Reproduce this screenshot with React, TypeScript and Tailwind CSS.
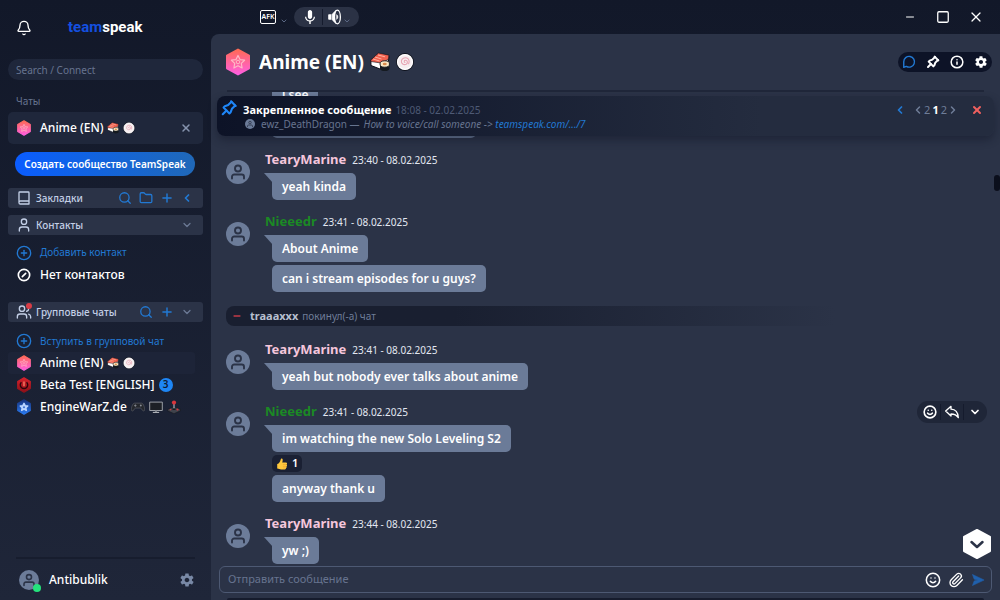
import type { ReactNode } from "react";
import {
  Bell,
  ChevronDown,
  ChevronLeft,
  ChevronRight,
  CirclePlus,
  Folder,
  Info,
  Minus,
  Paperclip,
  Plus,
  Search,
  Smile,
  Square,
  User,
  Users,
  X,
} from "lucide-react";
import { IoMdMic, IoMdSettings } from "react-icons/io";
import { TbPin } from "react-icons/tb";
import clsx from "clsx";

/* ---------- drawings ---------- */

type HexProps = { from: string; to: string; className?: string; children?: ReactNode };

function Hex({ from, to, className, children }: HexProps) {
  const id = `hex-${from.slice(1)}`;
  return (
    <svg viewBox="0 0 26 28" className={className} aria-hidden="true">
      <defs>
        <linearGradient id={id} x1="0" y1="0" x2="0" y2="1">
          <stop offset="0" stopColor={from} />
          <stop offset="1" stopColor={to} />
        </linearGradient>
      </defs>
      <path
        d="M13 1.5 24 7.7V20.3L13 26.5 2 20.3V7.7Z"
        fill={`url(#${id})`}
        stroke={`url(#${id})`}
        strokeWidth="2"
        strokeLinejoin="round"
      />
      {children}
    </svg>
  );
}

const star = "M13 7.5 15 11.6 19.6 12.2 16.3 15.4 17.1 20 13 17.8 8.9 20 9.7 15.4 6.4 12.2 11 11.6Z";

function AnimeHex({ className }: { className?: string }) {
  return (
    <Hex from="#ff6a55" to="#ff5fe0" className={className}>
      <path d={star} fill="none" stroke="#ffb9c6" strokeWidth="1.2" strokeLinejoin="round" />
      <circle cx="13" cy="14" r="1.8" fill="none" stroke="#ffb9c6" />
    </Hex>
  );
}

function BetaHex({ className }: { className?: string }) {
  return (
    <Hex from="#d8212c" to="#8d1018" className={className}>
      <path d="M8.500 9a6.500 6.500 0 1 0 9 0" fill="none" stroke="#2b070c" strokeWidth="2.500" />
      <path d="M13 8v8" stroke="#ff8a6b" strokeWidth="2.200" />
    </Hex>
  );
}

function EngineHex({ className }: { className?: string }) {
  return (
    <Hex from="#16337f" to="#2a7af0" className={className}>
      <path d={star} fill="#b9d4ff" stroke="#b9d4ff" strokeWidth="2.500" strokeLinejoin="round" />
      <circle cx="13" cy="14.500" r="1.800" fill="#3a6fd0" />
    </Hex>
  );
}

function Sushi({ className }: { className?: string }) {
  return (
    <svg viewBox="0 0 20 20" className={className} aria-hidden="true">
      <path d="M.8 8 8 2l11 2.500-1 8L10 17 1 13.500Z" fill="#fff" stroke="#0b0e18" strokeWidth="1" strokeLinejoin="round" />
      <path d="M.8 8 8.500 1 19 3.200 18.200 7.500 11 11 .8 9.500Z" fill="#f0614f" stroke="#0b0e18" strokeWidth=".6" />
      <path d="m5 5 6.500 2M8 3l7 1.800M3 7l6.500 2" stroke="#ffb09d" strokeWidth="1" />
      <path d="M10 12v4.200c0 3.800 9.500 3.800 9.500 0V12Z" fill="#151a20" />
      <ellipse cx="14.750" cy="12" rx="4.750" ry="3.200" fill="#fbe8c4" stroke="#151a20" strokeWidth=".9" />
      <ellipse cx="14.750" cy="12" rx="2" ry="1.200" fill="#d98a4a" />
    </svg>
  );
}

function FishCake({ className }: { className?: string }) {
  return (
    <svg viewBox="0 0 20 20" className={className} aria-hidden="true">
      <circle cx="10" cy="10" r="9.300" fill="#f6eef0" stroke="#0b0e18" strokeWidth="1.300" />
      <circle cx="10" cy="10" r="8.300" fill="none" stroke="#fff" strokeWidth="1.400" />
      <path
        d="M10 10.500c-1.500-.5-1-2.700.8-2.500 2.300.3 2.500 3.500.5 4.500-2.800 1.300-5.700-.8-5.300-3.700C6.400 6 9.500 4.600 12 5.600c2.500 1 3.300 3.900 2 6.300"
        fill="none"
        stroke="#e8a5b3"
        strokeWidth="1.200"
        strokeLinecap="round"
      />
    </svg>
  );
}

function Gamepad({ className }: { className?: string }) {
  return (
    <svg viewBox="0 0 20 20" className={className} aria-hidden="true">
      <path
        d="M5 4.500h10c2.500 0 4.500 6 4.500 9 0 3-2.800 2.500-4 0-.7-1.500-1.500-2-2.500-2H7c-1 0-1.800.5-2.500 2-1 2.500-4 3-4 0 0-3 2-9 4.500-9Z"
        fill="#24272d"
        stroke="#5b5f67"
        strokeWidth="1"
      />
      <path d="M4.500 8h3.400M6.200 6.300v3.400" stroke="#8a8e96" strokeWidth="1.200" />
      <circle cx="14" cy="8" r="1.400" fill="#8a8e96" />
    </svg>
  );
}

function Monitor({ className }: { className?: string }) {
  return (
    <svg viewBox="0 0 20 20" className={className} aria-hidden="true">
      <path d="M1 3h18v12H1Z" fill="#1d2026" stroke="#a8abb2" strokeWidth="1.300" />
      <path d="M8.500 15h3v2h-3Z" fill="#777b83" />
      <path d="M5.500 17.700h9" stroke="#c4c7cc" strokeWidth="1.400" />
    </svg>
  );
}

function Joystick({ className }: { className?: string }) {
  return (
    <svg viewBox="0 0 20 20" className={className} aria-hidden="true">
      <path d="m.8 13.500 9.200-4 9.200 4v2L10 19.500.8 15.500Z" fill="#3f434c" stroke="#14161b" strokeWidth=".8" />
      <path d="M10 5v8" stroke="#a5a9b1" strokeWidth="1.800" />
      <circle cx="10" cy="3.700" r="3" fill="#d9363c" />
      <ellipse cx="10" cy="13" rx="2.500" ry="1.200" fill="#15171b" />
      <circle cx="15" cy="13.600" r="1.500" fill="#d9363c" />
      <circle cx="5" cy="13.600" r="1.200" fill="#d9363c" />
    </svg>
  );
}

function ThumbsUp({ className }: { className?: string }) {
  return (
    <svg viewBox="0 0 20 20" className={className} aria-hidden="true">
      <path
        d="M2 10c2 0 5-3.500 6-8 .4-1.600 3-1.200 3.200 1 .1 1.500-.4 3.200-.9 4.700h6.200c2.300 0 2.500 2.600 1 3.200 1.300.7 1.200 2.600-.1 3.100.8.9.4 2.300-.8 2.600.3 1.300-.5 2.400-2 2.400H8.500C6 19 5 17.500 2 17.500Z"
        fill="#ffc83d"
      />
      <path d="M11.500 10.900h5.500M11.500 14h5.500M12 16.600h4" stroke="#e3972b" strokeWidth=".8" />
    </svg>
  );
}

function Speaker({ className }: { className?: string }) {
  return (
    <svg viewBox="0 0 20 20" className={className} fill="none" stroke="currentColor" aria-hidden="true">
      <path d="M2.500 6.500h3v7h-3a1 1 0 0 1-1-1v-5a1 1 0 0 1 1-1Z" fill="currentColor" stroke="none" />
      <path d="m6.500 6.500 4.500-4.500c-2 5-2 11 0 16l-4.500-4.500Z" fill="currentColor" strokeWidth="1" strokeLinejoin="round" />
      <ellipse cx="13" cy="10" rx="3.700" ry="8.500" strokeWidth="1.600" />
      <path d="M12 7c2.200 1 2.200 5 0 6Z" fill="currentColor" strokeWidth=".6" />
    </svg>
  );
}

function ChatIcon({ className }: { className?: string }) {
  return (
    <svg viewBox="0 0 24 24" className={className} fill="none" stroke="currentColor" strokeWidth="2.400" aria-hidden="true">
      <path d="M3 21V11.500a9.200 9.200 0 1 1 4.500 8L3 21Z" strokeLinejoin="round" />
    </svg>
  );
}

function BookmarksIcon({ className }: { className?: string }) {
  return (
    <svg viewBox="0 0 24 24" className={className} fill="none" stroke="currentColor" strokeWidth="2" strokeLinejoin="round" aria-hidden="true">
      <path d="M5.500 3h13a1 1 0 0 1 1 1v17h-13a2 2 0 0 1-2-2V4a1 1 0 0 1 1-1ZM4.500 18a2 2 0 0 1 2-1.500h13" />
    </svg>
  );
}

function ReplyIcon({ className }: { className?: string }) {
  return (
    <svg viewBox="0 0 24 24" className={className} fill="none" stroke="currentColor" strokeWidth="2" strokeLinejoin="round" aria-hidden="true">
      <path d="M2.500 10.500 10.500 3.500v4.300c7 .3 10.500 4.500 11 12.700-2.500-4-5.500-5.500-11-5.500v3Z" />
    </svg>
  );
}

function SendIcon({ className }: { className?: string }) {
  return (
    <svg viewBox="0 0 24 24" className={className} aria-hidden="true">
      <path d="M2.500 2.500 22.500 12 2.500 21.500 5.500 13.500 12 12 5.500 10.500Z" fill="currentColor" stroke="currentColor" strokeLinejoin="round" />
    </svg>
  );
}

function Avatar({ className }: { className?: string }) {
  return (
    <svg viewBox="0 0 24 24" className={className} aria-hidden="true">
      <circle cx="12" cy="12" r="12" fill="#6c7c99" />
      <circle cx="12" cy="8.500" r="3" fill="none" stroke="#2b3347" strokeWidth="1.900" />
      <path d="M6 18.500v-1.700c0-1.500 1-2.300 2.300-2.300h7.400c1.300 0 2.300.8 2.300 2.300v1.700" fill="none" stroke="#2b3347" strokeWidth="1.900" strokeLinecap="round" />
    </svg>
  );
}

/* ---------- sidebar ---------- */

function SectionHeader({ icon, title, children }: { icon: ReactNode; title: string; children: ReactNode }) {
  return (
    <div className="flex h-5 items-center rounded-[3px] bg-[#2b3347] pl-2 pr-2.5 text-[#c3cfe6]">
      {icon}
      <h2 className="ml-1 text-[10px] font-medium whitespace-nowrap">{title}</h2>
      <div className="ml-auto flex items-center gap-[7px] text-[#2279d3]">{children}</div>
    </div>
  );
}

function IconButton({ label, className, children }: { label: string; className?: string; children: ReactNode }) {
  return (
    <button type="button" aria-label={label} className={clsx("flex shrink-0 items-center justify-center", className)}>
      {children}
    </button>
  );
}

const groupChats = [
  {
    name: "Anime (EN)",
    icon: <AnimeHex className="size-4" />,
    extra: (
      <>
        <Sushi className="size-3" />
        <FishCake className="size-3" />
      </>
    ),
    active: true,
  },
  {
    name: "Beta Test [ENGLISH]",
    icon: <BetaHex className="size-4" />,
    extra: (
      <span className="flex size-3.5 items-center justify-center rounded-full bg-[#1e86f5] text-[10px] font-semibold text-[#0f1a33]">3</span>
    ),
  },
  {
    name: "EngineWarZ.de",
    icon: <EngineHex className="size-4" />,
    extra: (
      <>
        <Gamepad className="size-3.5 shrink-0" />
        <Monitor className="size-3.5 shrink-0" />
        <Joystick className="size-3.5 shrink-0" />
      </>
    ),
  },
];

function Sidebar() {
  return (
    <aside className="flex w-[211px] shrink-0 flex-col px-2">
      <div className="flex h-[59px] items-center gap-9 pl-2 pb-1">
        <IconButton label="Notifications" className="text-white">
          <Bell className="size-4" strokeWidth={2} />
        </IconButton>
        <a href="#" className="font-['Roboto',sans-serif] text-[15px] font-bold text-white">
          <span className="text-[#1450e0]">team</span>speak
        </a>
      </div>
      <input
        type="text"
        aria-label="Search / Connect"
        placeholder="Search / Connect"
        className="h-[21px] rounded-full bg-[#1f273b] px-2 text-[10px] outline-none placeholder:text-[#67748f]"
      />
      <h2 className="mt-[11px] pl-2 text-[10px] leading-5 text-[#67748f]">Чаты</h2>
      <div className="mt-px flex h-8 items-center rounded-[5px] bg-[#1f273b] px-2">
        <a href="#" className="flex flex-1 items-center gap-1 text-xs font-medium text-white">
          <AnimeHex className="mr-1 size-4" />
          Anime (EN)
          <Sushi className="size-3" />
          <FishCake className="size-3" />
        </a>
        <IconButton label="Закрыть" className="mr-[3px] text-[#8593ad]">
          <X className="size-3" strokeWidth={3} />
        </IconButton>
      </div>
      <button
        type="button"
        className="ml-[7px] mr-2 mt-2 h-6 rounded-full bg-gradient-to-r from-[#0b5cff] to-[#2068b8] text-[10px] font-semibold whitespace-nowrap text-white"
      >
        Создать сообщество TeamSpeak
      </button>

      <div className="mt-3 flex flex-col gap-[7px]">
        <SectionHeader icon={<BookmarksIcon className="size-4" />} title="Закладки">
          <IconButton label="Поиск"><Search className="size-3.5" strokeWidth={2.2} /></IconButton>
          <IconButton label="Папка"><Folder className="size-3.5" strokeWidth={2.2} /></IconButton>
          <IconButton label="Добавить"><Plus className="size-3.5" strokeWidth={2.5} /></IconButton>
          <IconButton label="Развернуть"><ChevronLeft className="size-3" strokeWidth={3.5} /></IconButton>
        </SectionHeader>
        <SectionHeader icon={<User className="size-4" strokeWidth={2} />} title="Контакты">
          <IconButton label="Свернуть" className="text-[#6c7a95]"><ChevronDown className="size-3" strokeWidth={2.5} /></IconButton>
        </SectionHeader>
      </div>
      <div className="mt-[7px] text-xs">
        <button type="button" className="flex h-[22px] items-center gap-2 pl-2 text-[10px] text-[#2279d3]">
          <CirclePlus className="size-4" />
          Добавить контакт
        </button>
        <p className="flex h-[22px] items-center gap-2 pl-2 font-medium text-white">
          <svg viewBox="0 0 24 24" className="size-4" fill="none" stroke="currentColor" strokeWidth="2.500" strokeLinecap="round" aria-hidden="true">
            <circle cx="12" cy="12" r="8.500" />
            <path d="m9.500 14.500 5-5" />
          </svg>
          Нет контактов
        </p>
      </div>

      <div className="mt-4">
        <SectionHeader
          icon={
            <span className="relative">
              <Users className="size-4" strokeWidth={2} />
              <span className="absolute -top-px right-0 size-1.5 rounded-full bg-[#d83c46]" />
            </span>
          }
          title="Групповые чаты"
        >
          <IconButton label="Поиск"><Search className="size-3.5" strokeWidth={2.2} /></IconButton>
          <IconButton label="Добавить"><Plus className="size-3.5" strokeWidth={2.5} /></IconButton>
          <IconButton label="Свернуть" className="text-[#6c7a95]"><ChevronDown className="size-3" strokeWidth={2.5} /></IconButton>
        </SectionHeader>
      </div>
      <button type="button" className="mt-2 flex h-[22px] items-center gap-2 pl-2 text-[10px] text-[#2279d3]">
        <CirclePlus className="size-4" />
        Вступить в групповой чат
      </button>
      <ul className="mr-2">
        {groupChats.map((chat) => (
          <li key={chat.name}>
            <a
              href="#"
              className={clsx(
                "flex h-[22px] items-center gap-1 rounded-[3px] pl-2 text-xs font-medium whitespace-nowrap text-white",
                chat.active && "bg-[#1d2438]"
              )}
            >
              <span className="mr-1">{chat.icon}</span>
              {chat.name}
              {chat.extra}
            </a>
          </li>
        ))}
      </ul>

      <div className="mx-2 mt-auto flex h-[43px] items-center border-t-2 border-[#171d2e] pl-[3px]">
        <span className="relative">
          <Avatar className="size-5" />
          <span className="absolute -bottom-0.5 -right-0.5 size-2 rounded-full bg-[#25e37c]" />
        </span>
        <span className="ml-2.5 text-xs font-medium text-white">Antibublik</span>
        <IconButton label="Настройки" className="ml-auto text-[#7989a6]">
          <IoMdSettings className="size-4" />
        </IconButton>
      </div>
    </aside>
  );
}

/* ---------- title bar ---------- */

function TitleBar() {
  return (
    <header className="flex h-[34px] shrink-0 items-center pl-[49px] pr-4 text-white">
      <IconButton label="AFK" className="h-3.5 w-4 rounded-[2px] border border-white text-[7px] font-semibold">
        AFK
      </IconButton>
      <ChevronDown className="ml-1 mt-2 size-2 text-[#5a6783]" strokeWidth={3} />
      <div className="ml-1.5 flex h-5 items-center rounded-full bg-[#2b3245] px-2">
        <IconButton label="Микрофон"><IoMdMic className="size-4" /></IconButton>
        <span className="mx-1 h-4 w-px bg-[#151b2d]" />
        <IconButton label="Звук"><Speaker className="size-4" /></IconButton>
        <ChevronDown className="mt-2 size-2 text-[#5a6783]" strokeWidth={3} />
      </div>
      <div className="ml-auto flex items-center gap-[17px]">
        <IconButton label="Minimize" className="size-4"><Minus className="size-3" strokeWidth={2} /></IconButton>
        <IconButton label="Maximize" className="size-4">
          <Square className="size-3.5" strokeWidth={2.2} />
        </IconButton>
        <IconButton label="Close" className="size-4"><X className="size-4" strokeWidth={1.8} /></IconButton>
      </div>
    </header>
  );
}

/* ---------- chat ---------- */

type Message = { text: string; likes?: number };

type GroupProps = {
  author: string;
  color: string;
  time: string;
  messages: Message[];
  actions?: boolean;
};

const groups: (GroupProps | { left: string })[] = [
  { author: "TearyMarine", color: "text-[#f5c6dc]", time: "23:40 - 08.02.2025", messages: [{ text: "yeah kinda" }] },
  {
    author: "Nieeedr",
    color: "text-[#1b8a24]",
    time: "23:41 - 08.02.2025",
    messages: [{ text: "About Anime" }, { text: "can i stream episodes for u guys?" }],
  },
  { left: "traaaxxx" },
  {
    author: "TearyMarine",
    color: "text-[#f5c6dc]",
    time: "23:41 - 08.02.2025",
    messages: [{ text: "yeah but nobody ever talks about anime" }],
  },
  {
    author: "Nieeedr",
    color: "text-[#1b8a24]",
    time: "23:41 - 08.02.2025",
    messages: [{ text: "im watching the new Solo Leveling S2", likes: 1 }, { text: "anyway thank u" }],
    actions: true,
  },
  { author: "TearyMarine", color: "text-[#f5c6dc]", time: "23:44 - 08.02.2025", messages: [{ text: "yw ;)" }] },
];

function Bubble({ children, tail, className }: { children?: ReactNode; tail?: boolean; className?: string }) {
  return (
    <div
      className={clsx(
        "relative flex h-[27px] shrink-0 items-center rounded-[5px] bg-[#6b7b98] px-2.5 text-xs font-semibold text-white",
        className
      )}
    >
      {tail && (
        <svg viewBox="0 0 14 10" className="absolute -left-2 top-0 h-2.5 w-3.5" aria-hidden="true">
          <path d="M0 0h14v10H9Z" fill="#6b7b98" />
        </svg>
      )}
      <span className="relative">{children}</span>
    </div>
  );
}

function MessageGroup({ author, color, time, messages, actions }: GroupProps) {
  return (
    <article className="flex shrink-0 gap-[15px]">
      <Avatar className="mt-2.5 size-6 shrink-0" />
      <div className="flex flex-1 flex-col items-start gap-[3px]">
        <div className="flex h-5 items-center gap-1.5 self-stretch">
          <span className={clsx("text-[13px] font-bold", color)}>{author}</span>
          <time className="text-[10px] text-[#e3e8f2]">{time}</time>
          {actions && (
            <div className="ml-auto flex h-[22px] items-center gap-[3px] rounded-full bg-[#1f2638] px-1.5 text-white">
              <IconButton label="Реакция"><Smile className="size-3.5" strokeWidth={2.8} /></IconButton>
              <span className="h-4 w-px bg-[#151b2d]" />
              <IconButton label="Ответить"><ReplyIcon className="size-4" /></IconButton>
              <span className="h-4 w-px bg-[#151b2d]" />
              <IconButton label="Ещё" className="ml-0.5"><ChevronDown className="size-3" strokeWidth={3.5} /></IconButton>
            </div>
          )}
        </div>
        {messages.map((message, i) => (
          <div key={message.text} className="ml-[7px] flex flex-col items-start gap-[3px]">
            <Bubble tail={i === 0}>{message.text}</Bubble>
            {message.likes !== undefined && (
              <button type="button" className="flex h-[17px] items-center gap-1 rounded-[5px] bg-[#1a2033] px-1 text-[11px] font-semibold text-white">
                <ThumbsUp className="size-3" />
                {message.likes}
              </button>
            )}
          </div>
        ))}
      </div>
    </article>
  );
}

function SystemLine({ name }: { name: string }) {
  return (
    <p className="my-0.5 flex h-5 shrink-0 items-center rounded-lg bg-gradient-to-r from-[#191f30] from-30% to-[#2b3347] to-80% pl-1.5 text-[10px] text-[#6f7d98]">
      <Minus className="size-2.5 text-[#c23b47]" strokeWidth={3.5} />
      <strong className="ml-2 mr-1 text-[11px] font-bold text-[#b7bfcf]">{name}</strong>
      покинул(-а) чат
    </p>
  );
}

function PinnedMessage() {
  return (
    <section className="absolute inset-x-1.5 top-1 flex h-10 rounded-lg bg-gradient-to-r from-[#0d1327] to-[#242c3f] to-70% pl-[26px] pr-[11px] shadow-[0_4px_8px_rgba(15,20,38,0.45)]">
      <TbPin className="absolute left-0.5 top-0.5 size-5 text-[#1f86f7]" strokeWidth={2.5} />
      <div className="flex min-w-0 flex-1 flex-col pt-1">
        <div className="flex h-5 items-center gap-1 leading-5">
          <h2 className="text-[11px] font-bold text-white">Закрепленное сообщение</h2>
          <time className="text-[10px] text-[#4e5a75]">18:08 - 02.02.2025</time>
        </div>
        <p className="-mt-1 flex items-center gap-1 whitespace-nowrap text-[10px] leading-4 text-[#67748f]">
          <Avatar className="ml-0.5 mr-0.5 size-2.5" />
          ewz_DeathDragon —
          <em>
            How to voice/call someone -&gt;{" "}
            <a href="#" className="text-[#2279d3]">teamspeak.com/.../7</a>
          </em>
        </p>
      </div>
      <nav className="mt-1 flex h-5 items-center text-[11px] text-[#6f7d98]">
        <IconButton label="Свернуть" className="mr-1.5 text-[#2279d3]"><ChevronLeft className="size-3" strokeWidth={3.5} /></IconButton>
        <IconButton label="Назад"><ChevronLeft className="size-3" strokeWidth={3} /></IconButton>
        <span>2</span>
        <span className="mx-0.5 font-bold text-white">1</span>
        <span>2</span>
        <IconButton label="Вперёд"><ChevronRight className="size-3" strokeWidth={3} /></IconButton>
        <IconButton label="Закрыть" className="ml-3 text-[#f0605f]"><X className="size-3" strokeWidth={4} /></IconButton>
      </nav>
    </section>
  );
}

function Chat() {
  return (
    <main className="flex min-h-0 flex-1 flex-col rounded-tl-lg bg-[#2b3347]">
      <div className="mx-4 flex h-[58px] shrink-0 items-center border-b-2 border-[#20273a] text-white">
        <AnimeHex className="-ml-0.5 h-7 w-[26px]" />
        <h1 className="ml-2 mr-1.5 text-[19px] font-bold">Anime (EN)</h1>
        <Sushi className="mr-1.5 size-5" />
        <FishCake className="size-4.5" />
        <div className="-mr-2 ml-auto flex h-5 items-center gap-2 rounded-full bg-[#0d1327] px-[3px]">
          <IconButton label="Чат" className="size-4 text-[#2279d3]"><ChatIcon className="size-3.5" /></IconButton>
          <IconButton label="Закрепленные" className="size-4"><TbPin className="size-4" strokeWidth={3} /></IconButton>
          <IconButton label="Информация" className="size-4"><Info className="size-3.5" strokeWidth={2.6} /></IconButton>
          <IconButton label="Настройки" className="size-4"><IoMdSettings className="size-3.5" /></IconButton>
        </div>
      </div>

      <div className="relative min-h-0 flex-1">
        <div className="flex h-full flex-col justify-end gap-3 overflow-hidden pb-0.5 pl-[15px] pr-[13px]">
          <div className="ml-[46px] flex shrink-0 flex-col items-start gap-[3px]">
            <Bubble>i see</Bubble>
            <Bubble className="w-[204px]" />
          </div>
          {groups.map((item, i) =>
            "left" in item ? <SystemLine key={i} name={item.left} /> : <MessageGroup key={i} {...item} />
          )}
        </div>
        <PinnedMessage />
        <span className="absolute right-0 top-[83px] h-4 w-1.5 rounded-full bg-[#0b0f1c]" />
        <button type="button" aria-label="Вниз" className="absolute bottom-1.5 right-2 text-[#2b3347]">
          <svg viewBox="0 0 30 32" className="h-8 w-[30px]" aria-hidden="true">
            <path d="M15 2 28 9V23L15 30 2 23V9Z" fill="#fff" stroke="#fff" strokeWidth="2" strokeLinejoin="round" />
            <path d="m9.500 14 5.500 5 5.500-5" fill="none" stroke="currentColor" strokeWidth="2.500" strokeLinecap="round" strokeLinejoin="round" />
          </svg>
        </button>
      </div>

      <form className="mx-2 flex h-[27px] shrink-0 items-center gap-[7px] rounded-md border border-[#4d5973] pl-2 pr-1.5">
        <input
          type="text"
          aria-label="Отправить сообщение"
          placeholder="Отправить сообщение"
          className="min-w-0 flex-1 bg-transparent text-[11px] text-white outline-none placeholder:text-[#67748f]"
        />
        <IconButton label="Эмодзи" className="text-white"><Smile className="size-4" strokeWidth={2.3} /></IconButton>
        <IconButton label="Прикрепить" className="text-white"><Paperclip className="size-4" strokeWidth={2} /></IconButton>
        <IconButton label="Отправить" className="text-[#2060ac]"><SendIcon className="size-3.5" /></IconButton>
      </form>
      <div className="mx-4 mt-[5px] h-0.5 shrink-0 rounded-t bg-[#161c2d]" />
    </main>
  );
}

export default function App() {
  return (
    <div className="flex h-screen overflow-hidden bg-gradient-to-b from-[#121829] to-[#1f2639] font-['Noto_Sans',sans-serif]">
      <Sidebar />
      <div className="flex min-w-0 flex-1 flex-col">
        <TitleBar />
        <Chat />
      </div>
    </div>
  );
}
